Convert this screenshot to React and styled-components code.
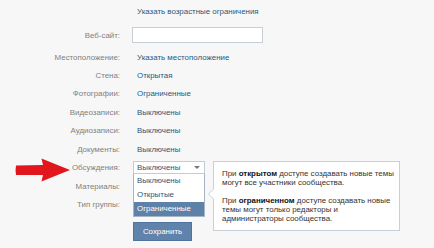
import React from "react";
import styled, { createGlobalStyle } from "styled-components";

const Global = createGlobalStyle`
  html, body { margin: 0; padding: 0; background: #f7f7f7; }
  body { font-family: "Liberation Sans", Arial, sans-serif; font-size: 7.9px; color: #333; }
  #root { width: 434px; height: 248px; overflow: hidden; }
`;

const Page = styled.div`
  display: flex;
  flex-direction: column;
  padding-top: 2px;
  width: 434px;
  height: 248px;
  box-sizing: border-box;
`;

const Row = styled.div`
  display: grid;
  grid-template-columns: 120px 1fr;
  column-gap: 12px;
  align-items: center;
  height: ${(p) => p.$h || 18.5}px;
  margin-bottom: ${(p) => p.$mb || 0}px;
`;

const Label = styled.div`
  position: relative;
  text-align: right;
  color: #808080;
  white-space: nowrap;
`;

const Value = styled.div`
  position: relative;
  padding-left: 5px;
  color: #2b587a;
  white-space: nowrap;
`;

const Field = styled.div`
  position: relative;
  display: flex;
  align-items: center;
`;

const TextInput = styled.input`
  width: 131px;
  height: 16px;
  box-sizing: border-box;
  border: 1px solid #c6ced7;
  background: #fff;
  margin: 0;
  padding: 0 4px;
  outline: none;
`;

const Select = styled.div`
  position: relative;
  margin-left: 1px;
  width: 72px;
  height: 13px;
  box-sizing: border-box;
  border: 1px solid #c3ccd6;
  background: #fff;
  color: #2b587a;
  padding-left: 3px;
  display: flex;
  align-items: center;
  justify-content: space-between;
`;

const Caret = styled.span`
  width: 0;
  height: 0;
  margin-right: 4px;
  border-left: 3px solid transparent;
  border-right: 3px solid transparent;
  border-top: 3px solid #777;
`;

const List = styled.ul`
  position: absolute;
  left: -1px;
  top: 12px;
  width: 72px;
  box-sizing: border-box;
  margin: 0;
  padding: 0;
  list-style: none;
  background: #fff;
  border: 1px solid #a6b4c4;
  border-top: none;
  z-index: 2;
`;

const Item = styled.li`
  height: 14px;
  line-height: 14px;
  padding-left: 3px;
  color: ${(p) => (p.$active ? "#fff" : "#2b587a")};
  background: ${(p) => (p.$active ? "#5e81a8" : "#fff")};
`;

const Tooltip = styled.div`
  position: absolute;
  left: 81px;
  top: 0;
  width: 187px;
  height: 70px;
  box-sizing: border-box;
  background: #fff;
  border: 1px solid #c9cfd6;
  padding: 7px 2px 0 8px;
  color: #333;
  line-height: 9px;
  white-space: nowrap;
  z-index: 2;
  &::before, &::after {
    content: "";
    position: absolute;
    top: 27px;
    border-top: 5px solid transparent;
    border-bottom: 5px solid transparent;
  }
  &::before { left: -6px; border-right: 5px solid #c9cfd6; }
  &::after { left: -5px; border-right: 5px solid #fff; }
`;

const Para = styled.p`
  margin: 0 0 9px 0;
  b { color: #111; }
`;

const Arrow = styled.svg`
  position: absolute;
  left: 15px;
  top: -5px;
`;

const SaveButton = styled.button`
  margin-left: 1px;
  width: 59px;
  height: 19px;
  border: 1px solid #4e739c;
  background: #5f83aa;
  color: #fff;
  font-family: inherit;
  font-size: 7.9px;
  padding: 0;
  cursor: pointer;
`;

export default function App() {
  return (
    <>
      <Global />
      <Page>
        <Row $h={18} $mb={2}>
          <span />
          <Value>Указать возрастные ограничения</Value>
        </Row>
        <Row $h={26}>
          <Label>Веб-сайт:</Label>
          <Field>
            <TextInput />
          </Field>
        </Row>
        <Row $h={18}>
          <Label>Местоположение:</Label>
          <Value>Указать местоположение</Value>
        </Row>
        <Row>
          <Label>Стена:</Label>
          <Value>Открытая</Value>
        </Row>
        <Row>
          <Label>Фотографии:</Label>
          <Value>Ограниченные</Value>
        </Row>
        <Row>
          <Label>Видеозаписи:</Label>
          <Value>Выключены</Value>
        </Row>
        <Row>
          <Label>Аудиозаписи:</Label>
          <Value>Выключены</Value>
        </Row>
        <Row>
          <Label>Документы:</Label>
          <Value>Выключены</Value>
        </Row>
        <Row>
          <Label>
            <Arrow width="56" height="24" viewBox="0 0 56 24">
              <path d="M1 7.5 L28 7 L26.5 0.5 Q40 6 55 12 Q40 18 26.5 23.5 L28 17 L1 17 Q0 12.5 1 7.5 Z" fill="#e2171d" />
            </Arrow>
            Обсуждения:
          </Label>
          <Field>
            <Select>
              Выключены
              <Caret />
              <List>
                <Item>Выключены</Item>
                <Item>Открытые</Item>
                <Item $active>Ограниченные</Item>
              </List>
            </Select>
            <Tooltip>
              <Para>
                При <b>открытом</b> доступе создавать новые темы
                <br />
                могут все участники сообщества.
              </Para>
              <Para>
                При <b>ограниченном</b> доступе создавать новые
                <br />
                темы могут только редакторы и
                <br />
                администраторы сообщества.
              </Para>
            </Tooltip>
          </Field>
        </Row>
        <Row>
          <Label>Материалы:</Label>
          <Value />
        </Row>
        <Row $mb={8}>
          <Label>Тип группы:</Label>
          <Value />
        </Row>
        <Row $h={19}>
          <span />
          <Field>
            <SaveButton>Сохранить</SaveButton>
          </Field>
        </Row>
      </Page>
    </>
  );
}
